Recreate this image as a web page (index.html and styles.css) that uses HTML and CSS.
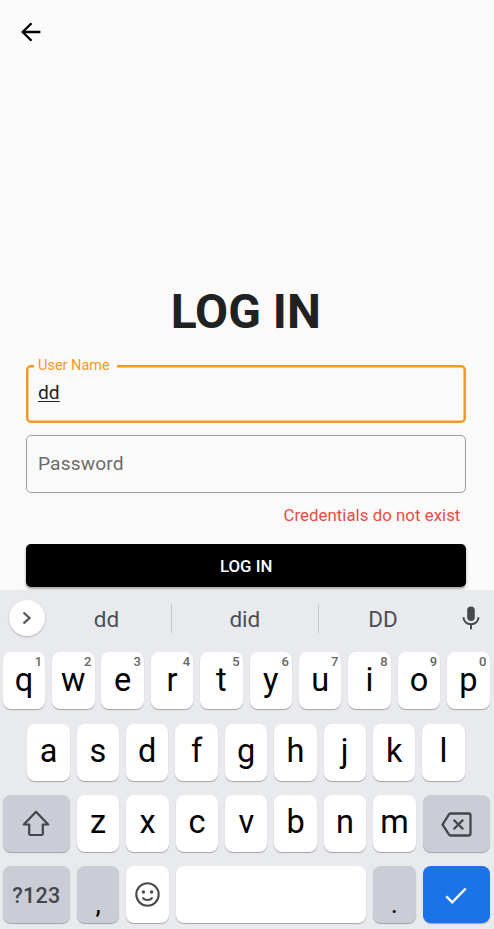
FILE: index.html
```html
<!DOCTYPE html>
<html lang="en">
<head>
<meta charset="utf-8">
<title>Log in</title>
<link rel="stylesheet" href="styles.css">
</head>
<body>
<main class="login">
  <header class="topbar">
    <svg class="back" viewBox="0 0 20 20"><path d="M19.4 10H1.8M10.5 1.2L1.7 10l8.8 8.8"/></svg>
  </header>
  <h1 class="title">LOG IN</h1>
  <div class="field field-active"><span class="field-label">User Name</span><span class="value">dd</span></div>
  <div class="field"><span class="placeholder">Password</span></div>
  <p class="error">Credentials do not exist</p>
  <div class="submit">LOG IN</div>
</main>
<section class="keyboard">
  <div class="suggestions">
    <span class="expand"><svg viewBox="0 0 12 14"><path d="M2.5 1.5L8.5 7l-6 5.5"/></svg></span>
    <span class="word">dd</span><span class="word">did</span><span class="word">DD</span>
    <svg class="mic" viewBox="0 0 18 24"><rect x="5.2" y="0.5" width="7.6" height="14.5" rx="3.8"/><path d="M1.5 11.2c0 4.2 3.3 7 7.5 7s7.5-2.8 7.5-7M9 18v5.2"/></svg>
  </div>
  <div class="row">
    <span class="key">q<sup>1</sup></span><span class="key">w<sup>2</sup></span><span class="key">e<sup>3</sup></span><span class="key">r<sup>4</sup></span><span class="key">t<sup>5</sup></span><span class="key">y<sup>6</sup></span><span class="key">u<sup>7</sup></span><span class="key">i<sup>8</sup></span><span class="key">o<sup>9</sup></span><span class="key">p<sup>0</sup></span>
  </div>
  <div class="row row-home">
    <span class="key">a</span><span class="key">s</span><span class="key">d</span><span class="key">f</span><span class="key">g</span><span class="key">h</span><span class="key">j</span><span class="key">k</span><span class="key">l</span>
  </div>
  <div class="row">
    <span class="key wide gray"><svg class="shift" viewBox="0 0 28 27"><path d="M14 1.7L1.8 14.5h5.4v9.3q0 1.2 1.2 1.2h11.2q1.2 0 1.2-1.2v-9.3h5.4z"/></svg></span>
    <span class="key">z</span><span class="key">x</span><span class="key">c</span><span class="key">v</span><span class="key">b</span><span class="key">n</span><span class="key">m</span>
    <span class="key wide gray"><svg class="delete" viewBox="0 0 31 25"><path d="M9.6 1.5h17.9q2 0 2 2v18q0 2-2 2H9.6q-1 0-1.6-.9L1.6 12.5 8 2.4q.6-.9 1.6-.9z"/><path d="M12.6 7.7l9.6 9.6M22.2 7.7l-9.6 9.6"/></svg></span>
  </div>
  <div class="row">
    <span class="key wide gray symbols">?123</span>
    <span class="key gray punct">,</span>
    <span class="key"><svg class="smile" viewBox="0 0 25 25"><circle cx="12.5" cy="12.5" r="11.2"/><path d="M7.6 15.5c2 3.4 7.8 3.4 9.8 0"/><circle class="eye" cx="8.4" cy="10" r="1.7"/><circle class="eye" cx="16.6" cy="10" r="1.7"/></svg></span>
    <span class="key space"></span>
    <span class="key gray punct">.</span>
    <span class="key wide enter"><svg class="check" viewBox="0 0 22 17"><path d="M1.3 9.3l6 6L20.7 1.5"/></svg></span>
  </div>
</section>
</body>
</html>
```
FILE: styles.css
```css
* { box-sizing: border-box; }
body {
  margin: 0;
  width: 494px;
  height: 929px;
  overflow: hidden;
  background: #fafafa;
  font-family: Roboto, "Liberation Sans", sans-serif;
  color: #212121;
}
svg { display: block; fill: none; stroke-linecap: butt; }
.login { height: 590px; padding: 0 27.6px 0 26px; }
.topbar { height: 64px; margin-left: -5px; padding-top: 22px; }
.back { width: 20px; height: 20px; stroke: #000; stroke-width: 2.3; }
.title {
  margin: 218px 1px 0 0;
  height: 60px;
  font-size: 48px;
  line-height: 60px;
  font-weight: 700;
  text-align: center;
}
.field {
  position: relative;
  display: flex;
  align-items: center;
  height: 58px;
  margin-top: 12px;
  padding: 0 0 1px 11px;
  border: 1px solid #9e9e9e;
  border-radius: 5px;
  font-size: 19.2px;
}
.field-active {
  margin-top: 23px;
  padding: 0 0 3px 10px;
  border: 2px solid #f5981c;
  box-shadow: inset 0 0 0 .5px #f5981c;
}
.field-label {
  position: absolute;
  left: 6px;
  top: -10px;
  width: 83px;
  padding-left: 4px;
  background: #fafafa;
  color: #f5981c;
  font-size: 14.5px;
  line-height: 17px;
}
.value { text-decoration: underline; text-decoration-thickness: 1px; text-underline-offset: 2px; }
.placeholder { color: #6b6b6b; letter-spacing: .1px; }
.error {
  margin: 12px 6px 0 0;
  height: 22px;
  line-height: 21px;
  font-size: 16.8px;
  letter-spacing: .05px;
  text-align: right;
  color: #ea4a45;
}
.submit {
  height: 43px;
  margin-top: 17px;
  border-radius: 5px;
  background: #000;
  box-shadow: 0 2px 3px rgba(0, 0, 0, .35);
  color: #fff;
  font-size: 16.8px;
  font-weight: 500;
  line-height: 44px;
  text-align: center;
}
.keyboard {
  position: relative;
  display: flex;
  flex-direction: column;
  gap: 14.3px;
  height: 339px;
  padding-left: 2.7px;
  background: #e8eaed;
}
.suggestions {
  display: flex;
  align-items: center;
  height: 48px;
  padding: 8px 0 0 6px;
}
.expand {
  display: flex;
  align-items: center;
  justify-content: center;
  width: 36px;
  height: 36px;
  margin-right: -10px;
  border-radius: 50%;
  background: #fff;
  box-shadow: 0 1px 2px rgba(0, 0, 0, .25);
}
.expand svg { width: 12px; height: 14px; stroke: #555; stroke-width: 2.3; }
.word {
  width: 146.5px;
  height: 29px;
  line-height: 30px;
  font-size: 22.5px;
  text-align: center;
  color: #4b4e53;
}
.word:nth-child(2) { width: 137.4px; padding-left: 7px; border-right: 1px solid #c7c9cd; }
.word:nth-child(3) { border-right: 1px solid #c7c9cd; }
.word:nth-child(4) { width: 143.8px; padding-right: 15px; }
.mic { width: 18px; height: 24px; stroke: #45484c; stroke-width: 2; }
.mic rect { fill: #45484c; stroke: none; }
.row { display: flex; gap: 6.95px; height: 57px; flex: none; }
.row-home { padding-left: 24.6px; }
.key {
  position: relative;
  display: flex;
  align-items: center;
  justify-content: center;
  flex: none;
  width: 42.45px;
  height: 57px;
  padding-bottom: 2px;
  border-radius: 8px;
  background: #fff;
  box-shadow: 0 1px 1px rgba(0, 0, 0, .3);
  color: #000;
  font-size: 32.5px;
}
.key sup {
  position: absolute;
  top: 2px;
  right: 3px;
  font-size: 13px;
  line-height: 16px;
  font-weight: 500;
  color: #666;
}
.wide { width: 67.3px; }
.gray { background: #cacdd5; color: #42464c; }
.space { width: 190.6px; }
.symbols { padding: 2px 0 0; font-size: 21.5px; font-weight: 500; letter-spacing: .3px; }
.punct { padding: 18px 0 0; font-size: 27px; color: #000; }
.enter { background: #1a73e8; padding-bottom: 0; }
.shift { width: 28px; height: 27px; margin-top: 2px; stroke: #42464c; stroke-width: 2.2; stroke-linejoin: round; }
.delete { width: 31px; height: 25px; margin-top: 4px; stroke: #42464c; stroke-width: 2.3; }
.smile { width: 25px; height: 25px; margin-top: 2px; stroke: #4a4a4a; stroke-width: 2.1; }
.eye { fill: #4a4a4a; stroke: none; }
.check { width: 22px; height: 17px; margin-top: 1px; stroke: #fff; stroke-width: 2.4; }
```
